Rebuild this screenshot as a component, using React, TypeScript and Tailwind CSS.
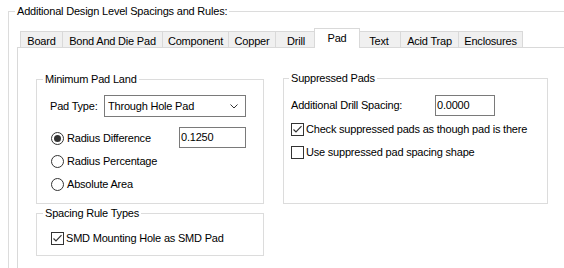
import type { ReactNode } from 'react';

const font = { fontFamily: '"Liberation Sans", Arial, sans-serif' };

type Tab = { label: string; width: string; offset: string; selected?: boolean };

const tabs: Tab[] = [
	{ label: 'Board', width: 'w-[43px]', offset: 'ml-0' },
	{ label: 'Bond And Die Pad', width: 'w-[101px]', offset: '-ml-px' },
	{ label: 'Component', width: 'w-[67px]', offset: '-ml-px' },
	{ label: 'Copper', width: 'w-[48px]', offset: '-ml-px' },
	{ label: 'Drill', width: 'w-[42px]', offset: '-ml-px' },
	{ label: 'Pad', width: 'w-[46px]', offset: '-ml-[3px]', selected: true },
	{ label: 'Text', width: 'w-[44px]', offset: '-ml-[3px]' },
	{ label: 'Acid Trap', width: 'w-[59px]', offset: '-ml-px' },
	{ label: 'Enclosures', width: 'w-[65px]', offset: '-ml-px' },
];

function GroupBox({
	title,
	className,
	legendOffset = 'ml-[6px]',
	children,
}: {
	title: string;
	className?: string;
	legendOffset?: string;
	children: ReactNode;
}) {
	return (
		<fieldset className={`border border-[#dcdcdc] ${className ?? ''}`}>
			<legend className={`${legendOffset} px-[2px] leading-[14px]`}>{title}</legend>
			{children}
		</fieldset>
	);
}

function CheckBox({ checked }: { checked?: boolean }) {
	return (
		<span className="flex h-[13px] w-[13px] shrink-0 items-center justify-center border border-[#333333] bg-white">
			{checked && (
				<svg width="11" height="11" viewBox="0 0 11 11">
					<path d="M1.5 5.5 L4 8 L9.5 2.2" fill="none" stroke="#333333" strokeWidth="1.2" />
				</svg>
			)}
		</span>
	);
}

function Radio({ checked }: { checked?: boolean }) {
	return (
		<span className="flex h-[13px] w-[13px] shrink-0 items-center justify-center rounded-full border border-[#333333] bg-white">
			{checked && <span className="h-[7px] w-[7px] rounded-full bg-[#333333]" />}
		</span>
	);
}

function TextBox({ value, className }: { value: string; className: string }) {
	return (
		<div className={`flex items-center border border-[#7a7a7a] bg-white pl-[1px] ${className}`}>
			{value}
		</div>
	);
}

export default function App() {
	return (
		<div
			className="h-[268px] w-[564px] overflow-hidden bg-white pt-[4px] text-[11px] tracking-[-0.2px] text-black"
			style={font}>
			<fieldset className="ml-[8px] h-[300px] w-[600px] border border-[#dcdcdc]">
				<legend className="ml-[6px] px-[2px] leading-[14px]">
					Additional Design Level Spacings and Rules:
				</legend>

				<div className="ml-[8px] mt-[10px]">
					{/* tab strip */}
					<div className="flex h-[19px] items-end pl-[3px]">
						{tabs.map((tab) =>
							tab.selected ? (
								<div
									key={tab.label}
									className={`relative z-10 -mb-px flex h-[20px] items-center justify-center border border-b-0 border-[#d9d9d9] bg-white pb-[1px] leading-[14px] ${tab.width} ${tab.offset}`}>
									{tab.label}
								</div>
							) : (
								<div
									key={tab.label}
									className={`flex h-[16px] items-center justify-center border border-b-0 border-[#d9d9d9] bg-[#f0f0f0] pt-[2px] leading-[14px] ${tab.width} ${tab.offset}`}>
									{tab.label}
								</div>
							),
						)}
					</div>

					{/* tab page */}
					<div className="h-[260px] w-[560px] border-l border-t border-[#d9d9d9] bg-white pl-[18px] pt-[24px]">
						<div className="flex gap-[19px]">
							<div className="flex w-[228px] flex-col gap-[2px]">
								<GroupBox title="Minimum Pad Land" className="h-[132px]">
									<div className="flex flex-col pl-[13px] pt-[9px]">
										<div className="flex items-center">
											<span className="w-[54px]">Pad Type:</span>
											<div className="flex h-[22px] w-[142px] items-center justify-between border border-[#7a7a7a] bg-white pl-[3px] pr-[7px]">
												<span>Through Hole Pad</span>
												<svg width="8" height="5" viewBox="0 0 8 5">
													<path d="M0.5 0.5 L4 4 L7.5 0.5" fill="none" stroke="#333333" strokeWidth="1" />
												</svg>
											</div>
										</div>
										<div className="mt-[10px] flex flex-col">
											<div className="flex h-[23px] items-center">
												<div className="ml-[1px] flex w-[128px] items-center gap-[3px]">
													<Radio checked />
													<span>Radius Difference</span>
												</div>
												<TextBox value="0.1250" className="h-[21px] w-[67px] self-start" />
											</div>
											<div className="ml-[1px] flex h-[23px] items-center gap-[3px]">
												<Radio />
												<span>Radius Percentage</span>
											</div>
											<div className="ml-[1px] flex h-[23px] items-center gap-[3px]">
												<Radio />
												<span>Absolute Area</span>
											</div>
										</div>
									</div>
								</GroupBox>

								<GroupBox title="Spacing Rule Types" className="h-[50px]">
									<div className="ml-[14px] mt-[7px] flex h-[22px] items-center gap-[2px]">
										<CheckBox checked />
										<span>SMD Mounting Hole as SMD Pad</span>
									</div>
								</GroupBox>
							</div>

							<GroupBox
								title="Suppressed Pads"
								className="-mt-px h-[133px] w-[265px]"
								legendOffset="ml-[5px]">
								<div className="flex flex-col pl-[7px] pt-[10px]">
									<div className="flex items-center">
										<span className="w-[144px]">Additional Drill Spacing:</span>
										<TextBox value="0.0000" className="h-[21px] w-[60px]" />
									</div>
									<div className="mt-[2px] flex h-[23px] items-center gap-[2px]">
										<CheckBox checked />
										<span>Check suppressed pads as though pad is there</span>
									</div>
									<div className="flex h-[23px] items-center gap-[2px]">
										<CheckBox />
										<span>Use suppressed pad spacing shape</span>
									</div>
								</div>
							</GroupBox>
						</div>
					</div>
				</div>
			</fieldset>
		</div>
	);
}
